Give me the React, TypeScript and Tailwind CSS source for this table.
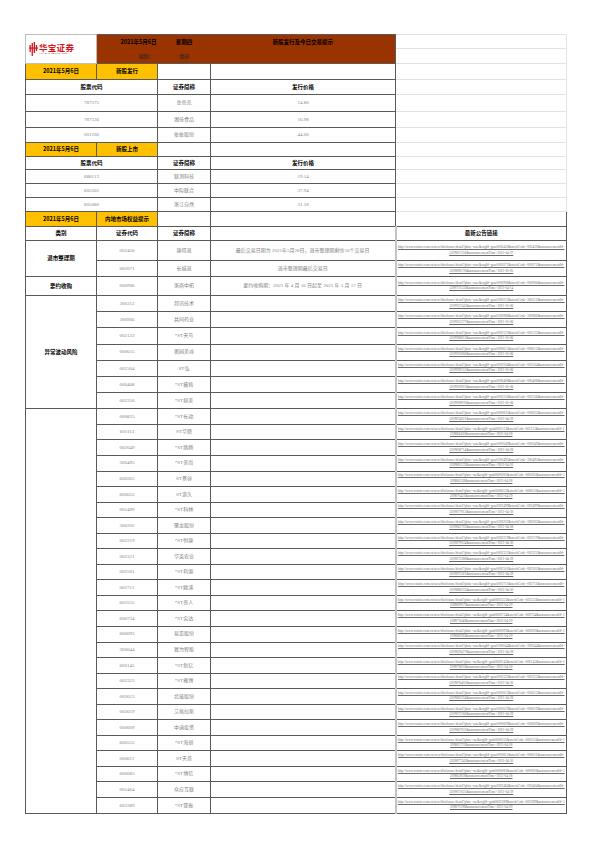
import React from "react";

const B = "font-['Noto_Sans_CJK_SC',sans-serif] font-bold text-[5.5px] text-black";
const D = "font-['Liberation_Serif','Noto_Sans_CJK_SC',serif] text-[5px] text-[#7f7f7f]";
const L = "font-['Liberation_Serif',serif] text-[3.4px] leading-[5.4px] text-[#6a6a6a] underline break-all";

const bd = "border border-[#5a5a5a]";
const bdE = "border-y border-r border-[#5a5a5a] border-l-2 border-l-[#c4c4c4]";
const light = "border border-[#e2e2e2]";

function url(code: string, id: string, date: string) {
  const sh = code.startsWith("6");
  return `http://www.cninfo.com.cn/new/disclosure/detail?plate=${sh ? "sse" : "szse"}&orgId=${sh ? "gssh0" : "gssz0"}${code}&stockCode=${code}&announcementId=${id}&announcementTime=${date}`;
}

type Row = { code: string; name: string; id: string; date: string };

const abnormal: Row[] = [
  { code: "300312", name: "邦讯技术", id: "1209912345", date: "2021-05-06" },
  { code: "300966", name: "共同药业", id: "1209913377", date: "2021-05-06" },
  { code: "002122", name: "*ST天马", id: "1209908812", date: "2021-05-06" },
  { code: "000615", name: "奥园美谷", id: "1209910066", date: "2021-05-06" },
  { code: "002504", name: "ST弘", id: "1209909155", date: "2021-05-06" },
  { code: "000408", name: "*ST藏格", id: "1209910923", date: "2021-05-06" },
  { code: "002356", name: "*ST赫美", id: "1209909876", date: "2021-05-06" },
];

const risk: Row[] = [
  { code: "000835", name: "*ST长动", id: "1209874021", date: "2021-04-29" },
  { code: "601113", name: "ST华鼎", id: "1209866450", date: "2021-04-28" },
  { code: "002049", name: "*ST路畅", id: "1209858714", date: "2021-04-28" },
  { code: "300495", name: "*ST美尚", id: "1209881122", date: "2021-04-30" },
  { code: "600265", name: "ST景谷", id: "1209860338", date: "2021-04-28" },
  { code: "600652", name: "ST游久", id: "1209870451", date: "2021-04-29" },
  { code: "002499", name: "*ST科林", id: "1209877913", date: "2021-04-30" },
  { code: "300202", name: "聚龙股份", id: "1209861702", date: "2021-04-28" },
  { code: "002219", name: "*ST恒康", id: "1209879034", date: "2021-04-30" },
  { code: "002321", name: "华英农业", id: "1209873388", date: "2021-04-29" },
  { code: "002501", name: "*ST利源", id: "1209875561", date: "2021-04-29" },
  { code: "002711", name: "*ST欧浦", id: "1209880255", date: "2021-04-30" },
  { code: "603555", name: "*ST贵人", id: "1209869917", date: "2021-04-29" },
  { code: "600734", name: "*ST实达", id: "1209871640", date: "2021-04-29" },
  { code: "600093", name: "易见股份", id: "1209868283", date: "2021-04-29" },
  { code: "300044", name: "赛为智能", id: "1209859477", date: "2021-04-28" },
  { code: "600145", name: "*ST新亿", id: "1209878810", date: "2021-04-30" },
  { code: "002323", name: "*ST雅博", id: "1209876402", date: "2021-04-30" },
  { code: "002613", name: "北玻股份", id: "1209862594", date: "2021-04-28" },
  { code: "002619", name: "艾格拉斯", id: "1209872166", date: "2021-04-29" },
  { code: "000609", name: "中迪投资", id: "1209867035", date: "2021-04-29" },
  { code: "600555", name: "*ST海创", id: "1209865721", date: "2021-04-28" },
  { code: "000611", name: "ST天首", id: "1209877342", date: "2021-04-30" },
  { code: "600083", name: "*ST博信", id: "1209863819", date: "2021-04-28" },
  { code: "002464", name: "众应互联", id: "1209871025", date: "2021-04-29" },
  { code: "603389", name: "*ST亚振", id: "1209870198", date: "2021-04-29" },
];

function Logo() {
  return (
    <div className="flex items-center gap-[1px] pl-[3px]">
      <svg width="9" height="15" viewBox="0 0 9 15">
        <rect x="0.5" y="3" width="1.3" height="7" fill="#d7141a" />
        <rect x="2.6" y="1" width="1.3" height="13" fill="#d7141a" />
        <rect x="4.7" y="0" width="1.3" height="11" fill="#d7141a" />
        <rect x="6.8" y="3" width="1.3" height="6" fill="#d7141a" />
        <rect x="0" y="5.5" width="9" height="1.2" fill="#d7141a" />
      </svg>
      <div className="flex flex-col items-start">
        <span className="font-['Noto_Sans_CJK_SC',sans-serif] font-bold text-[8.5px] leading-[9px] text-[#d7141a] tracking-[0.3px]">华宝证券</span>
        <span className="font-['Liberation_Sans',sans-serif] text-[2.2px] leading-[3px] text-[#d7141a] tracking-[0.35px]">HUABAO SECURITIES</span>
      </div>
    </div>
  );
}

function LinkCell({ r, cls = bdE }: { r: Row; cls?: string }) {
  return (
    <td className={`${cls} px-[1px] text-center align-middle`}>
      <div className={L}>{url(r.code, r.id, r.date)}</div>
    </td>
  );
}

export default function App() {
  return (
    <div className="w-[595px] h-[842px] bg-white pt-[34px] pl-[25px] overflow-hidden">
      <table className="border-collapse table-fixed w-[541px]">
        <colgroup>
          <col className="w-[71px]" />
          <col className="w-[61px]" />
          <col className="w-[53px]" />
          <col className="w-[185px]" />
          <col className="w-[171px]" />
        </colgroup>
        <tbody>
          <tr className="h-[14px]">
            <td rowSpan={2} className="border border-[#bdbdbd] bg-white align-middle">
              <Logo />
            </td>
            <td className={`bg-[#993300] border-t border-[#5a5a5a] text-right pr-[1px] ${B}`}>2021年5月6日</td>
            <td className={`bg-[#993300] border-t border-[#5a5a5a] text-center ${B}`}>星期四</td>
            <td className={`bg-[#993300] border-t border-r border-[#5a5a5a] text-center ${B}`}>新股发行及今日交易提示</td>
            <td className={light}></td>
          </tr>
          <tr className="h-[15px]">
            <td className="bg-[#993300] border-b border-[#5a5a5a] text-right pr-[4px] font-['Noto_Sans_CJK_SC',sans-serif] text-[5px] text-[#222]">编制：</td>
            <td className="bg-[#993300] border-b border-[#5a5a5a] text-center font-['Noto_Sans_CJK_SC',sans-serif] text-[5px] text-[#222]">胡琪</td>
            <td className="bg-[#993300] border-b border-r border-[#5a5a5a]"></td>
            <td className={light}></td>
          </tr>

          <tr className="h-[16px]">
            <td className={`bg-[#ffc000] ${bd} text-center ${B}`}>2021年5月6日</td>
            <td className={`bg-[#ffc000] ${bd} text-center ${B}`}>新股发行</td>
            <td className={bd}></td>
            <td className={bd}></td>
            <td className={light}></td>
          </tr>
          <tr className="h-[15px]">
            <td colSpan={2} className={`${bd} text-center ${B}`}>股票代码</td>
            <td className={`${bd} text-center ${B}`}>证券简称</td>
            <td className={`${bd} text-center ${B}`}>发行价格</td>
            <td className={light}></td>
          </tr>
          {[
            ["787575", "金帝克", "14.80", 17],
            ["787536", "湘佳食品", "16.98", 16],
            ["001206", "依依股份", "44.00", 15],
          ].map(([c, n, p, h]) => (
            <tr key={c as string} style={{ height: h as number }}>
              <td colSpan={2} className={`${bd} text-center ${D}`}>{c}</td>
              <td className={`${bd} text-center ${D}`}>{n}</td>
              <td className={`${bd} text-center ${D}`}>{p}</td>
              <td className={light}></td>
            </tr>
          ))}

          <tr className="h-[14px]">
            <td className={`bg-[#ffc000] ${bd} text-center ${B}`}>2021年5月6日</td>
            <td className={`bg-[#ffc000] ${bd} text-center ${B}`}>新股上市</td>
            <td className={bd}></td>
            <td className={bd}></td>
            <td className={light}></td>
          </tr>
          <tr className="h-[13px]">
            <td colSpan={2} className={`${bd} text-center ${B}`}>股票代码</td>
            <td className={`${bd} text-center ${B}`}>证券简称</td>
            <td className={`${bd} text-center ${B}`}>发行价格</td>
            <td className={light}></td>
          </tr>
          {[
            ["688113", "联测科技", "19.14"],
            ["605305", "中际联合", "37.94"],
            ["605080", "浙江自然", "31.18"],
          ].map(([c, n, p]) => (
            <tr key={c} className="h-[14px]">
              <td colSpan={2} className={`${bd} text-center ${D}`}>{c}</td>
              <td className={`${bd} text-center ${D}`}>{n}</td>
              <td className={`${bd} text-center ${D}`}>{p}</td>
              <td className={light}></td>
            </tr>
          ))}

          <tr className="h-[15px]">
            <td className={`bg-[#ffc000] ${bd} text-center ${B}`}>2021年5月6日</td>
            <td className={`bg-[#ffc000] ${bd} text-center ${B}`}>内地市场权益提示</td>
            <td className={bd}></td>
            <td className={bd}></td>
            <td className={bd}></td>
          </tr>
          <tr className="h-[14px]">
            <td className={`${bd} text-center ${B}`}>类别</td>
            <td className={`${bd} text-center ${B}`}>证券代码</td>
            <td className={`${bd} text-center ${B}`}>证券简称</td>
            <td className={bd}></td>
            <td className={`${bdE} text-center ${B}`}>最新公告链接</td>
          </tr>
          <tr className="h-[20px]">
            <td rowSpan={2} className={`${bd} text-center ${B}`}>退市整理期</td>
            <td className={`${bd} text-center ${D}`}>002450</td>
            <td className={`${bd} text-center ${D}`}>康得退</td>
            <td className={`${bd} text-center ${D} text-[5.6px]`}>最后交易日期为 2021年5月28日，退市整理期剩余16个交易日</td>
            <LinkCell r={{ code: "002450", name: "", id: "1209857356", date: "2021-04-27" }} />
          </tr>
          <tr className="h-[16px]">
            <td className={`${bd} text-center ${D}`}>002071</td>
            <td className={`${bd} text-center ${D}`}>长城退</td>
            <td className={`${bd} text-center ${D} text-[5.6px]`}>退市整理期最后交易日</td>
            <LinkCell r={{ code: "002071", name: "", id: "1209890176", date: "2021-05-05" }} />
          </tr>
          <tr className="h-[19px]">
            <td className={`${bd} text-center ${B}`}>要约收购</td>
            <td className={`${bd} text-center ${D}`}>000906</td>
            <td className={`${bd} text-center ${D}`}>浙商中拓</td>
            <td className={`${bd} text-center ${D} text-[5.6px]`}>要约收购期：2021 年 4 月 16 日起至 2021 年 5 月 17 日</td>
            <LinkCell r={{ code: "000906", name: "", id: "1209721123", date: "2021-04-14" }} />
          </tr>
          {abnormal.map((r, i) => (
            <tr key={r.code} className="h-[16.2px]">
              {i === 0 && (
                <td rowSpan={abnormal.length} className={`${bd} text-center ${B}`}>异常波动风险</td>
              )}
              <td className={`${bd} text-center ${D}`}>{r.code}</td>
              <td className={`${bd} text-center ${D}`}>{r.name}</td>
              <td className={bd}></td>
              <LinkCell r={r} />
            </tr>
          ))}
          {risk.map((r, i) => (
            <tr key={r.code} className="h-[15.55px]">
              {i === 0 && <td rowSpan={risk.length} className={bd}></td>}
              <td className={`${bd} text-center ${D}`}>{r.code}</td>
              <td className={`${bd} text-center ${D}`}>{r.name}</td>
              <td className={bd}></td>
              <LinkCell r={r} />
            </tr>
          ))}
        </tbody>
      </table>
    </div>
  );
}
